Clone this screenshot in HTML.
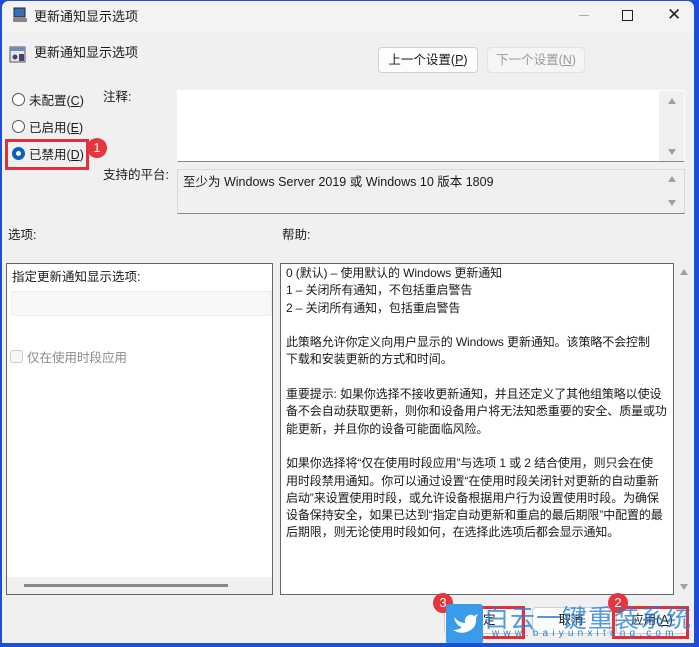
<!DOCTYPE html>
<html><head><meta charset="utf-8"><style>
*{margin:0;padding:0;box-sizing:border-box}
body{width:699px;height:647px;overflow:hidden;background:#1a4fd6;position:relative;font-family:"Liberation Sans","Noto Sans CJK SC",sans-serif;font-size:12.5px;color:#1a1a1a}
.win{position:absolute;left:2px;top:1px;width:692px;height:642px;background:#f0f0f0;border-radius:7px 7px 0 0;overflow:hidden}
.title{position:absolute;left:0;top:0;width:100%;height:32px;background:#f3f3f3}
.a{position:absolute;white-space:nowrap}
.btn{position:absolute;border:1px solid #cfcfcf;border-radius:4px;background:#fdfdfd;text-align:center;line-height:24px}
.radio{position:absolute;width:13px;height:13px;border:1px solid #555;border-radius:50%;background:#fff}
.box{position:absolute;border:1px solid #b5b5b5}
.tri{position:absolute;width:0;height:0;border-left:4px solid transparent;border-right:4px solid transparent}
.up{border-bottom:6px solid #a0a0a0}.dn{border-top:6px solid #a0a0a0}
.red{position:absolute;border:3px solid #e0303a}
.badge{position:absolute;width:20px;height:20px;border-radius:50%;background:#e8343c;color:#fff;text-align:center;line-height:20px;font-size:13px}
.help{position:absolute;left:284px;top:264px;line-height:17.3px;font-size:12px;white-space:nowrap;letter-spacing:-0.1px}
</style></head><body>
<div class="win">
 <div class="title"></div>
 <svg class="a" style="left:10px;top:6px" width="16" height="16"><rect x="2" y="1" width="11" height="9" fill="#3a6fb5" stroke="#223" stroke-width="1"/><rect x="1" y="11" width="14" height="4" rx="1" fill="#888"/></svg>
 <div class="a" style="left:32px;top:5px;font-size:13px">更新通知显示选项</div>
 <div class="a" style="left:577px;top:14px;width:10px;height:1px;background:#aaa"></div>
 <div class="a" style="left:620px;top:9px;width:11px;height:11px;border:1.3px solid #222"></div>
 <div class="a" style="left:665px;top:4px;font-size:17px;color:#222">✕</div>

 <svg class="a" style="left:7px;top:45px" width="17" height="17"><rect x="1" y="1" width="15" height="15" fill="#e8e8e8" stroke="#556" /><rect x="1" y="1" width="15" height="4" fill="#6b8fb8"/><circle cx="6" cy="11" r="2.5" fill="#446"/><rect x="10" y="8" width="5" height="7" fill="#446"/></svg>
 <div class="a" style="left:32px;top:41px;font-size:13px">更新通知显示选项</div>

 <div class="btn" style="left:376px;top:46px;width:100px;height:26px">上一个设置(<u>P</u>)</div>
 <div class="btn" style="left:485px;top:46px;width:98px;height:26px;background:#f5f5f5;border-color:#e3e3e3;color:#9a9a9a">下一个设置(<u>N</u>)</div>

 <div class="radio" style="left:10px;top:92px"></div><div class="a" style="left:27px;top:89px">未配置(<u>C</u>)</div>
 <div class="radio" style="left:10px;top:119px"></div><div class="a" style="left:27px;top:116px">已启用(<u>E</u>)</div>
 <div class="radio" style="left:10px;top:146px;border:4px solid #0a5fb8"></div><div class="a" style="left:27px;top:143px">已禁用(<u>D</u>)</div>
 <div class="red" style="left:3px;top:138px;width:84px;height:31px"></div>
 <div class="badge" style="left:85px;top:137px">1</div>

 <div class="a" style="left:101px;top:85px">注释:</div>
 <div class="box" style="left:175px;top:89px;width:508px;height:72px;background:#fff;border-color:#fff;border-bottom-color:#888"></div>
 <div class="a" style="left:657px;top:90px;width:25px;height:70px;background:#f0f0f0"></div>
 <div class="tri up" style="left:666px;top:97px"></div><div class="tri dn" style="left:666px;top:148px"></div>
 <div class="a" style="left:101px;top:163px">支持的平台:</div>
 <div class="box" style="left:175px;top:168px;width:508px;height:45px;background:#f0f0f0;border-color:#d8d8d8;border-bottom-color:#888"></div>
 <div class="a" style="left:181px;top:170px">至少为 Windows Server 2019 或 Windows 10 版本 1809</div>
 <div class="tri up" style="left:666px;top:175px"></div><div class="tri dn" style="left:666px;top:199px"></div>

 <div class="a" style="left:6px;top:223px">选项:</div>
 <div class="a" style="left:280px;top:223px">帮助:</div>

 <div class="box" style="left:4px;top:262px;width:267px;height:332px;background:#fff;border-color:#666"></div>
 <div class="a" style="left:10px;top:265px">指定更新通知显示选项:</div>
 <div class="a" style="left:9px;top:290px;width:261px;height:25px;background:#f8f8f8;border:1px solid #eee"></div>
 <div class="a" style="left:8px;top:349px;width:13px;height:13px;border:1px solid #ccc;border-radius:3px;background:#f6f6f6"></div>
 <div class="a" style="left:25px;top:346px;color:#8a8a8a">仅在使用时段应用</div>
 <div class="a" style="left:5px;top:576px;width:265px;height:17px;background:#f0f0f0"></div>
 <div class="a" style="left:22px;top:583px;width:204px;height:3px;background:#888"></div>

 <div class="box" style="left:278px;top:262px;width:394px;height:332px;background:#fff;border-color:#666"></div>
 <div class="tri up" style="left:678px;top:268px"></div><div class="tri dn" style="left:678px;top:583px"></div>
 <div class="help">0 (默认) – 使用默认的 Windows 更新通知<br>1 – 关闭所有通知，不包括重启警告<br>2 – 关闭所有通知，包括重启警告<br><br>此策略允许你定义向用户显示的 Windows 更新通知。该策略不会控制<br>下载和安装更新的方式和时间。<br><br>重要提示: 如果你选择不接收更新通知，并且还定义了其他组策略以使设<br>备不会自动获取更新，则你和设备用户将无法知悉重要的安全、质量或功<br>能更新，并且你的设备可能面临风险。<br><br>如果你选择将“仅在使用时段应用”与选项 1 或 2 结合使用，则只会在使<br>用时段禁用通知。你可以通过设置“在使用时段关闭针对更新的自动重新<br>启动”来设置使用时段，或允许设备根据用户行为设置使用时段。为确保<br>设备保持安全，如果已达到“指定自动更新和重启的最后期限”中配置的最<br>后期限，则无论使用时段如何，在选择此选项后都会显示通知。</div>

 <div class="btn" style="left:442px;top:606px;width:78px;height:27px">确定</div>
 <div class="btn" style="left:530px;top:606px;width:78px;height:27px">取消</div>
 <div class="btn" style="left:614px;top:606px;width:72px;height:27px">应用(<u>A</u>)</div>
 <div class="red" style="left:473px;top:605px;width:50px;height:33px"></div>
 <div class="red" style="left:610px;top:605px;width:77px;height:33px"></div>
 <div class="badge" style="left:431px;top:592px">3</div>
 <div class="badge" style="left:606px;top:592px">2</div>
 <div class="a" style="left:444px;top:603px;width:37px;height:40px;background:#3a9be8;border-radius:3px"></div>
 <svg class="a" style="left:449px;top:610px" width="28" height="24"><path d="M3 6 Q8 12 14 12 Q13 6 18 4 Q21 3 23 5 L27 3 L25 7 Q26 16 18 20 Q10 24 2 19 Q8 19 11 16 Q5 15 3 6Z" fill="#fff"/></svg>
 <div class="a" style="left:482px;top:598px;font-size:25px;color:#2a7fd6;opacity:.8;letter-spacing:1px">白云一键重装系统</div>
 <div class="a" style="left:490px;top:627px;font-size:10px;color:#2a7fd6;letter-spacing:4.2px">www.baiyunxitong.com</div>
</div>
</body></html>
